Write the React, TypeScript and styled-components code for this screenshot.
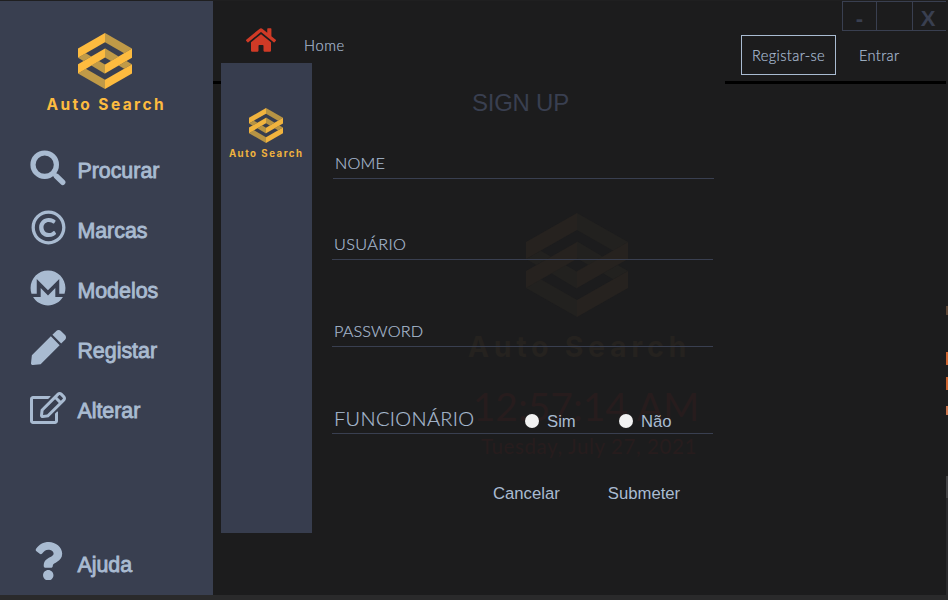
import React from "react";
import styled, { createGlobalStyle } from "styled-components";
import { FaRegCopyright, FaMonero, FaPen, FaRegEdit, FaQuestion, FaHome } from "react-icons/fa";

const GlobalStyle = createGlobalStyle`
  * { box-sizing: border-box; }
  body { margin: 0; background: #1c1c1d; font-family: "Liberation Sans", Arial, sans-serif; }
`;

const steel = "#a9bbd1";
const slate = "#393f50";

const Screen = styled.div`
  width: 948px; height: 600px; overflow: hidden;
  display: grid;
  grid-template: 1px 594px 5px / 213px 733px 2px;
  background: #1c1c1d;
`;
const TopEdge = styled.div`grid-column: 1 / 3; background: #1f1f20;`;
const BottomEdge = styled.div`grid-column: 1 / 4; background: #2a2a2b;`;
const RightEdge = styled.div`
  grid-column: 3; grid-row: 1 / 3; overflow: hidden;
  display: grid; grid-template-rows: 306px 9px 37px 13px 12px 13px 16px 9px 61px 22px 1fr;
  background: #1e1e1f;
`;
const EdgeMark = styled.i<{ $row: number; $color: string }>`
  grid-row: ${p => p.$row}; background: ${p => p.$color};
`;

const Sidebar = styled.aside`
  grid-row: 2; grid-column: 1;
  display: flex; flex-direction: column;
  background: ${slate};
`;
const Brand = styled.div<{ $top: number; $height: number; $right: number }>`
  display: flex; flex-direction: column; align-items: center;
  height: ${p => p.$height}px; padding: ${p => p.$top}px ${p => p.$right}px 0 0; flex: none;
`;
const BrandName = styled.div<{ $size: number; $spacing: number; $gap: number; $color?: string }>`
  margin-top: ${p => p.$gap}px;
  font: 700 ${p => p.$size}px/1 Inter, sans-serif;
  letter-spacing: ${p => p.$spacing}px; margin-right: -${p => p.$spacing}px;
  color: ${p => p.$color ?? "#fdbb3f"}; white-space: nowrap;
`;
const NavList = styled.nav`display: flex; flex-direction: column;`;
const NavItem = styled.a`
  display: flex; align-items: center; height: 60px;
  color: ${steel};
`;
const NavIcon = styled.span<{ $dy: number; $left: number }>`
  width: 77px; padding-left: ${p => p.$left}px; display: flex; margin-top: ${p => p.$dy}px; flex: none;
`;
const NavLabel = styled.span`
  font: 400 21.4px/24px "Liberation Sans", Arial, sans-serif;
  -webkit-text-stroke: .85px ${steel};
  padding: 2px 0 0 .4px;
`;
const Help = styled(NavItem)`margin: auto 0 1px;`;

const Main = styled.main`
  grid-row: 2; grid-column: 2; position: relative; min-width: 0;
`;
const Header = styled.header`
  height: 83px; border-bottom: 3px solid #000;
  display: flex; align-items: flex-start;
`;
const HomeLink = styled.a`
  display: flex; align-items: flex-start; flex: 1; padding: 24px 0 0 33px; color: #cf3a26;
`;
const Gothic = styled.span<{ $size: number; $spacing?: number }>`
  font: 300 ${p => p.$size}px/20px Lato, sans-serif;
  letter-spacing: ${p => p.$spacing ?? 0}px;
  -webkit-text-stroke: .2px ${steel};
  color: ${steel}; white-space: nowrap;
`;
const HomeLabel = styled(Gothic)`margin: 11px 0 0 28px;`;
const HeaderRight = styled.div`
  width: 205px; display: flex; flex-direction: column;
`;
const WindowButtons = styled.div`
  display: flex; align-self: flex-end; height: 30px; width: 104px;
  border: 1px solid ${slate}; border-right: 0;
`;
const WindowButton = styled.button<{ $width: number }>`
  width: ${p => p.$width}px; height: 28px; padding: 5px 0 0;
  border: 0; border-right: 1px solid ${slate}; background: none;
  display: flex; align-items: center; justify-content: center;
  font: 700 22px/20px "Liberation Sans", Arial, sans-serif; color: ${slate};
  &:last-child { border-right: 0; padding-right: 3px; }
`;
const AuthLinks = styled.div`display: flex; margin-top: 4px;`;
const SignUpLink = styled.a`
  width: 95px; height: 40px; border: 1px solid ${steel};
  display: flex; align-items: center; justify-content: center; padding-top: 2px;
`;
const SignInLink = styled.a`
  height: 40px; margin-left: 23px; display: flex; align-items: center; padding-top: 2px;
`;

const Watermark = styled.div`
  display: flex; flex-direction: column; align-items: center;
  padding: 129px 0 0; margin-left: -5px;
`;
const Clock = styled.div`
  margin-top: 20px; font: 39px/48px Lato, sans-serif; color: #271c1d;
  white-space: nowrap; padding-left: 18px;
`;
const Today = styled.div`
  margin-top: 2px; font: 20.5px/28px Lato, sans-serif; letter-spacing: .6px; color: #271c1d;
  white-space: nowrap; padding-left: 24px;
`;

const Dialog = styled.section`
  position: absolute; left: 8px; top: 62px; width: 504px; height: 470px;
  display: flex;
`;
const DialogHeaderMask = styled.div`
  position: absolute; left: 91px; right: 0; top: 17px; height: 5px; background: #1c1c1d;
`;
const DialogSide = styled.div`width: 91px; background: #373d4e;`;
const Form = styled.form`
  position: relative; flex: 1; display: flex; flex-direction: column; padding-left: 20px;
`;
const Title = styled.h1`
  margin: 25px 0 0 140px; height: 38px; color: ${slate};
  font: 400 24px/30px "Liberation Sans", Arial, sans-serif; letter-spacing: -.25px;
`;
const Field = styled.div<{ $height: number; $shift?: number }>`
  width: 381px; height: ${p => p.$height}px; margin-left: ${p => p.$shift ?? 0}px;
  padding: 0 0 5px 2px; border-bottom: 1px solid ${slate};
  display: flex; align-items: flex-end;
`;
const FieldLabel = styled(Gothic)`width: 191px;`;
const Option = styled.label`
  display: flex; align-items: center; gap: 8px; width: 94px; height: 14px;
  font: 400 16.7px/18px "Liberation Sans", Arial, sans-serif; color: ${steel};
`;
const OptionText = styled.span`padding-top: 2px;`;
const Radio = styled.i`width: 14px; height: 14px; border-radius: 50%; background: #f2f2f2;`;
const Actions = styled.div`display: flex; margin: 50px 0 0 161px; gap: 48px;`;
const Action = styled.button`
  padding: 0; border: 0; background: none; color: ${steel};
  font: 400 16.7px/20px "Liberation Sans", Arial, sans-serif;
`;

interface LogoProps {
  width: number;
  height: number;
  light?: string;
  dark?: string;
}

function Logo({ width, height, light = "#fdbb3f", dark = "#c09a47" }: LogoProps) {
  return (
    <svg width={width} height={height} viewBox="0 0 304 312" preserveAspectRatio="none">
      <g fill={dark}>
        <path d="M152 0 304 87 260 113 152 51Z" />
        <path d="M152 312 0 225 44 199 152 261Z" />
        <path d="M0 138 44 113 75 131 31 156Z" />
        <path d="M304 174 260 199 229 181 273 156Z" />
        <path d="M118 156 152 176V227L75 181Z" />
        <path d="M186 156 152 136V85L229 131Z" />
      </g>
      <g fill={light}>
        <path d="M0 87 152 0V51L0 138Z" />
        <path d="M304 225 152 312V261L304 174Z" />
        <path d="M0 174 152 87V137L0 225Z" />
        <path d="M304 138 152 225V175L304 87Z" />
      </g>
    </svg>
  );
}

function SearchIcon() {
  return (
    <svg width="36" height="36" viewBox="0 0 36 36" fill="none" stroke="currentColor">
      <circle cx="14.7" cy="14.7" r="11.7" strokeWidth="5.2" />
      <path d="M23.5 23.5 26.5 26.5" strokeWidth="4" />
      <path d="M26.5 26.3 32.7 32.3" strokeWidth="5.4" strokeLinecap="round" />
    </svg>
  );
}

const navItems = [
  { label: "Procurar", icon: <SearchIcon />, dy: -5, left: 30 },
  { label: "Marcas", icon: <FaRegCopyright size={35} />, dy: -6, left: 30.5 },
  { label: "Modelos", icon: <FaMonero size={36} />, dy: -5, left: 30 },
  { label: "Registar", icon: <FaPen size={35} />, dy: -6, left: 30.5 },
  { label: "Alterar", icon: <FaRegEdit size={36} />, dy: -5, left: 30.3 },
];

export default function App() {
  return (
    <>
      <GlobalStyle />
      <Screen>
        <TopEdge />
        <Sidebar>
          <Brand $top={32} $height={139} $right={3}>
            <Logo width={54} height={56} />
            <BrandName $size={15.5} $spacing={2.4} $gap={8}>Auto Search</BrandName>
          </Brand>
          <NavList>
            {navItems.map(item => (
              <NavItem key={item.label}>
                <NavIcon $dy={item.dy} $left={item.left}>{item.icon}</NavIcon>
                <NavLabel>{item.label}</NavLabel>
              </NavItem>
            ))}
          </NavList>
          <Help>
            <NavIcon $dy={-6} $left={29}><FaQuestion size={38.5} /></NavIcon>
            <NavLabel>Ajuda</NavLabel>
          </Help>
        </Sidebar>
        <Main>
          <Header>
            <HomeLink>
              <FaHome size={30} />
              <HomeLabel $size={14.6} $spacing={0.6}>Home</HomeLabel>
            </HomeLink>
            <HeaderRight>
              <WindowButtons>
                <WindowButton $width={34}>-</WindowButton>
                <WindowButton $width={36} aria-label="Maximize" />
                <WindowButton $width={33}>X</WindowButton>
              </WindowButtons>
              <AuthLinks>
                <SignUpLink><Gothic $size={14.6} $spacing={0.4}>Registar-se</Gothic></SignUpLink>
                <SignInLink><Gothic $size={14.6} $spacing={0.35}>Entrar</Gothic></SignInLink>
              </AuthLinks>
            </HeaderRight>
          </Header>
          <Watermark>
            <Logo width={102} height={104} light="#26221f" dark="#22211f" />
            <BrandName $size={28.5} $spacing={4.7} $gap={16} $color="#25221f">Auto Search</BrandName>
            <Clock>12:57:14 AM</Clock>
            <Today>Tuesday, July 27, 2021</Today>
          </Watermark>
          <Dialog>
            <DialogHeaderMask />
            <DialogSide>
              <Brand $top={45} $height={120} $right={2}>
                <Logo width={34} height={35} light="#f0b33e" dark="#b69344" />
                <BrandName $size={9.7} $spacing={1.5} $gap={6} $color="#f0b33e">Auto Search</BrandName>
              </Brand>
            </DialogSide>
            <Form>
              <Title>SIGN UP</Title>
              <Field $height={53} $shift={1}><FieldLabel $size={16.3} $spacing={0.2}>NOME</FieldLabel></Field>
              <Field $height={81}><FieldLabel $size={16.3} $spacing={0.35}>USUÁRIO</FieldLabel></Field>
              <Field $height={87}><FieldLabel $size={16.3} $spacing={0.1}>PASSWORD</FieldLabel></Field>
              <Field $height={87}>
                <FieldLabel $size={20} $spacing={0.33}>FUNCIONÁRIO</FieldLabel>
                <Option><Radio /><OptionText>Sim</OptionText></Option>
                <Option><Radio /><OptionText>Não</OptionText></Option>
              </Field>
              <Actions>
                <Action type="button">Cancelar</Action>
                <Action type="button">Submeter</Action>
              </Actions>
            </Form>
          </Dialog>
        </Main>
        <RightEdge>
          <EdgeMark $row={2} $color="#5d4636" />
          <EdgeMark $row={4} $color="#cc6430" />
          <EdgeMark $row={6} $color="#cc6430" />
          <EdgeMark $row={8} $color="#c9744c" />
          <EdgeMark $row={10} $color="#424244" />
          <EdgeMark $row={11} $color="#2a2a2c" />
        </RightEdge>
        <BottomEdge />
      </Screen>
    </>
  );
}
